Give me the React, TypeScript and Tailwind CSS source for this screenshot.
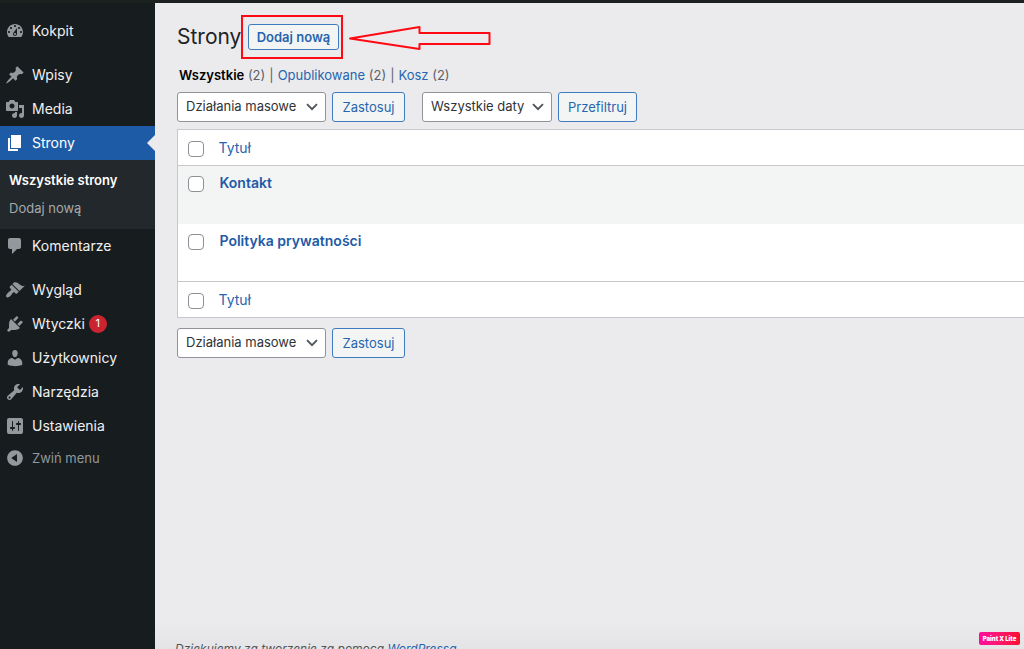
import type { ReactNode } from "react";

const icons = {
  dashboard:
    "M3.76 16h12.48c1.1-1.37 1.76-3.11 1.76-5 0-4.42-3.58-8-8-8s-8 3.58-8 8c0 1.89.66 3.63 1.76 5zM10 4c.55 0 1 .45 1 1s-.45 1-1 1-1-.45-1-1 .45-1 1-1zM6 6c.55 0 1 .45 1 1s-.45 1-1 1-1-.45-1-1 .45-1 1-1zm8 0c.55 0 1 .45 1 1s-.45 1-1 1-1-.45-1-1 .45-1 1-1zm-5.37 5.55L12 7v6c0 1.1-.9 2-2 2s-2-.9-2-2c0-.57.24-1.08.63-1.45zM4 10c.55 0 1 .45 1 1s-.45 1-1 1-1-.45-1-1 .45-1 1-1zm12 0c.55 0 1 .45 1 1s-.45 1-1 1-1-.45-1-1 .45-1 1-1zm-5 3c0-.55-.45-1-1-1s-1 .45-1 1 .45 1 1 1 1-.45 1-1z",
  post: "M10.44 3.02l1.82-1.82 6.36 6.35-1.83 1.82c-1.05-.68-2.48-.57-3.41.36l-.75.75c-.92.93-1.04 2.35-.35 3.41l-1.83 1.82-2.41-2.41-2.8 2.79c-.42.42-3.38 2.71-3.8 2.29s1.86-3.39 2.28-3.81l2.79-2.79L4.1 9.36l1.83-1.82c1.05.69 2.48.57 3.4-.36l.75-.75c.93-.92 1.05-2.35.36-3.41z",
  media:
    "M13 11V4c0-.55-.45-1-1-1h-1.67L9 1H5L3.67 3H2c-.55 0-1 .45-1 1v7c0 .55.45 1 1 1h10c.55 0 1-.45 1-1zM7 4.5c1.38 0 2.5 1.12 2.5 2.5S8.38 9.5 7 9.5 4.5 8.38 4.5 7 5.62 4.5 7 4.5zM14 6h5v10.5c0 1.38-1.12 2.5-2.5 2.5S14 17.88 14 16.5s1.12-2.5 2.5-2.5c.17 0 .34.02.5.05V9h-3V6zm-4 8.05V13h2v3.5c0 1.38-1.12 2.5-2.5 2.5S7 17.88 7 16.5 8.12 14 9.5 14c.17 0 .34.02.5.05z",
  page: "M6 15V2h10v13H6zm-1 1h8v2H3V5h2v11z",
  comments:
    "M5 2h9c1.1 0 2 .9 2 2v7c0 1.1-.9 2-2 2h-2l-5 5v-5H5c-1.1 0-2-.9-2-2V4c0-1.1.9-2 2-2z",
  appearance:
    "M14.48 11.06L7.41 3.99l1.5-1.5c.5-.56 2.3-.47 3.51.32 1.21.8 1.43 1.28 2.91 2.1 1.18.64 2.45 1.26 4.45.85zm-.71.71L6.7 4.7 4.93 6.47c-.39.39-.39 1.02 0 1.41l1.06 1.06c.39.39.39 1.03 0 1.42-.6.6-1.43 1.11-2.21 1.69-.35.26-.7.53-1.01.84C1.43 14.23.4 16.08 1.4 17.07c.99 1 2.84-.03 4.18-1.36.31-.31.58-.66.85-1.02.57-.78 1.08-1.61 1.69-2.21.39-.39 1.02-.39 1.41 0l1.06 1.06c.39.39 1.02.39 1.41 0z",
  plugins:
    "M13.11 4.36L9.87 7.6 8 5.73l3.24-3.24c.35-.34 1.05-.2 1.56.32.52.51.66 1.21.31 1.55zm-8 1.77l.91-1.12 9.01 9.01-1.19.84c-.71.71-2.63 1.16-3.82 1.16H6.14L4.9 17.26c-.59.59-1.54.59-2.12 0-.59-.58-.59-1.53 0-2.12l1.24-1.24v-3.88c0-1.13.4-3.19 1.09-3.89zm7.26 3.97l3.24-3.24c.34-.35 1.04-.21 1.55.31.52.51.66 1.21.31 1.55l-3.24 3.25z",
  users:
    "M10 9.25c-2.27 0-2.73-3.44-2.73-3.44C7 4.02 7.82 2 9.97 2c2.16 0 2.98 2.02 2.71 3.81 0 0-.41 3.44-2.68 3.44zm0 2.57L12.72 10c2.39 0 4.52 2.33 4.52 4.53v2.49s-3.65 1.13-7.24 1.13c-3.65 0-7.24-1.13-7.24-1.13v-2.49c0-2.25 1.94-4.48 4.47-4.48z",
  tools:
    "M16.68 9.77c-1.34 1.34-3.3 1.67-4.95.99l-5.41 6.52c-.99.99-2.59.99-3.58 0s-.99-2.59 0-3.57l6.52-5.42c-.68-1.65-.35-3.61.99-4.95 1.28-1.28 3.12-1.62 4.72-1.06l-2.89 2.89 2.82 2.82 2.86-2.87c.53 1.58.18 3.39-1.08 4.65zM3.81 16.21c.4.39 1.04.39 1.43 0 .4-.4.4-1.04 0-1.43-.39-.4-1.03-.4-1.43 0-.39.39-.39 1.03 0 1.43z",
  settings:
    "M18 16V4c0-1.1-.9-2-2-2H4c-1.1 0-2 .9-2 2v12c0 1.1.9 2 2 2h12c1.1 0 2-.9 2-2zM8 11h1c.55 0 1 .45 1 1s-.45 1-1 1H8v1.5c0 .28-.22.5-.5.5s-.5-.22-.5-.5V13H6c-.55 0-1-.45-1-1s.45-1 1-1h1V5.5c0-.28.22-.5.5-.5s.5.22.5.5V11zm5-2h-1c-.55 0-1-.45-1-1s.45-1 1-1h1V5.5c0-.28.22-.5.5-.5s.5.22.5.5V7h1c.55 0 1 .45 1 1s-.45 1-1 1h-1v5.5c0 .28-.22.5-.5.5s-.5-.22-.5-.5V9z",
  collapse:
    "M10 2.16c4.33 0 7.84 3.51 7.84 7.84s-3.51 7.84-7.84 7.84S2.16 14.33 2.16 10 5.71 2.16 10 2.16zm2 11.72V6.12L6.18 9.97z",
};

type IconName = keyof typeof icons;

function Icon({ name }: { name: IconName }) {
  return (
    <svg viewBox="0 0 20 20" className="size-5 shrink-0" fill="currentColor" fillRule="evenodd" aria-hidden="true">
      <path d={icons[name]} />
    </svg>
  );
}

function MenuItem({ icon, label, badge }: { icon: IconName; label: string; badge?: string }) {
  return (
    <li>
      <a href="#" className="flex h-[34px] items-center gap-[7px] pl-[5px] text-[#f0f0f1]">
        <span className="text-[#93989d]">
          <Icon name={icon} />
        </span>
        {label}
        {badge && (
          <span className="-ml-[3px] flex size-[18px] items-center justify-center rounded-full bg-[#cb2431] text-[11px] text-white">
            {badge}
          </span>
        )}
      </a>
    </li>
  );
}

function Sidebar() {
  return (
    <nav aria-label="Menu główne" className="w-[155px] shrink-0 bg-[#171c1f] pt-[11px] text-sm">
      <ul>
        <MenuItem icon="dashboard" label="Kokpit" />
      </ul>
      <ul className="mt-[10px]">
        <MenuItem icon="post" label="Wpisy" />
        <MenuItem icon="media" label="Media" />
        <li>
          <a href="#" aria-current="page" className="relative flex h-[34px] items-center gap-[7px] bg-[#1e5ba6] pl-[5px] text-white">
            <Icon name="page" />
            Strony
            <span className="absolute top-[9px] right-0 border-y-8 border-r-8 border-y-transparent border-r-[#ebebed]" />
          </a>
          <ul className="bg-[#23282c] pt-[6px] pb-[7px] pl-[9px] text-[13px]">
            <li className="flex h-7 items-center">
              <a href="#" className="font-semibold text-white">
                Wszystkie strony
              </a>
            </li>
            <li className="flex h-7 items-center">
              <a href="#" className="text-[#a5a8ab]">
                Dodaj nową
              </a>
            </li>
          </ul>
        </li>
        <MenuItem icon="comments" label="Komentarze" />
      </ul>
      <ul className="mt-[10px]">
        <MenuItem icon="appearance" label="Wygląd" />
        <MenuItem icon="plugins" label="Wtyczki" badge="1" />
        <MenuItem icon="users" label="Użytkownicy" />
        <MenuItem icon="tools" label="Narzędzia" />
        <MenuItem icon="settings" label="Ustawienia" />
      </ul>
      <button type="button" className="flex h-[30px] w-full items-center gap-[7px] pl-[5px] text-[13px] text-[#93989d]">
        <Icon name="collapse" />
        Zwiń menu
      </button>
    </nav>
  );
}

function Select({ label, option, width }: { label: string; option: string; width: string }) {
  return (
    <span className="relative flex">
      <select
        aria-label={label}
        className={`h-[30px] appearance-none rounded-[3px] border border-[#909398] bg-white pl-2 text-[13px] text-[#2f3337] ${width}`}
      >
        <option>{option}</option>
      </select>
      <svg
        viewBox="0 0 12 8"
        className="pointer-events-none absolute top-[11px] right-2 h-2 w-3"
        fill="none"
        stroke="#50555a"
        strokeWidth="1.9"
        aria-hidden="true"
      >
        <path d="M1 1.2l5 5 5-5" />
      </svg>
    </span>
  );
}

function Button({ children, width }: { children: ReactNode; width: string }) {
  return (
    <button
      type="button"
      className={`h-[30px] rounded-[3px] border border-[#3f7cbf] bg-[#f3f5f5] pt-[2px] text-[13px] text-[#2765ae] ${width}`}
    >
      {children}
    </button>
  );
}

function BulkActions() {
  return (
    <div className="flex gap-[6px]">
      <Select label="Działania masowe" option="Działania masowe" width="w-[149px]" />
      <Button width="w-[73px]">Zastosuj</Button>
    </div>
  );
}

function Check({ label }: { label: string }) {
  return (
    <input
      type="checkbox"
      aria-label={label}
      className="block size-4 appearance-none rounded-[4px] border border-[#8c8f94] bg-white"
    />
  );
}

function HeadingRow() {
  return (
    <tr className="h-9">
      <th className="w-[41px] pt-[3px] pl-[10px]">
        <Check label="Zaznacz wszystko" />
      </th>
      <th className="text-left font-normal">
        <a href="#" className="text-[#2765ae]">
          Tytuł
        </a>
      </th>
    </tr>
  );
}

function PagesTable() {
  const pages = ["Kontakt", "Polityka prywatności"];
  return (
    <table className="w-full border-collapse border-y border-l border-[#c6c8cc] bg-white text-sm">
      <thead className="border-b border-[#c6c8cc]">
        <HeadingRow />
      </thead>
      <tbody>
        {pages.map((title) => (
          <tr key={title} className="h-[58px] align-top odd:bg-[#f3f5f5]">
            <td className="pt-[10px] pl-[10px]">
              <Check label={`Zaznacz ${title}`} />
            </td>
            <td className="pt-[7px] pl-px">
              <a href="#" className="font-semibold text-[#1e5ba6]">
                {title}
              </a>
            </td>
          </tr>
        ))}
      </tbody>
      <tfoot className="border-t border-[#c6c8cc]">
        <HeadingRow />
      </tfoot>
    </table>
  );
}

function Views() {
  return (
    <ul className="mt-2 flex gap-1 pl-[2px] text-[13px] leading-4 text-[#5c6065]">
      <li>
        <a href="#" className="font-semibold text-black">
          Wszystkie
        </a>{" "}
        (2)
      </li>
      <li aria-hidden="true">|</li>
      <li>
        <a href="#" className="text-[#2765ae]">
          Opublikowane
        </a>{" "}
        (2)
      </li>
      <li aria-hidden="true">|</li>
      <li>
        <a href="#" className="text-[#2765ae]">
          Kosz
        </a>{" "}
        (2)
      </li>
    </ul>
  );
}

export default function App() {
  return (
    <div className="flex h-screen flex-col overflow-hidden bg-[#ebebed] font-['Inter',sans-serif]">
      <div className="h-[3px] shrink-0 bg-[#1b211f]" />
      <div className="flex min-h-0 grow">
        <Sidebar />
        <main className="flex min-w-0 grow flex-col pt-3 pl-[22px]">
          <header className="flex h-11 items-center">
            <h1 className="w-16 text-[21px] whitespace-nowrap text-[#1d2327]">Strony</h1>
            <div className="flex h-11 w-[102px] items-center border-2 border-[#ff0a14] pl-[5px]">
              <a
                href="#"
                className="flex h-[26px] w-[91px] items-center justify-center rounded-[3px] border border-[#3f7cbf] bg-[#f3f5f5] pt-px text-[13px] font-semibold text-[#2765ae]"
              >
                Dodaj nową
              </a>
            </div>
            <svg
              viewBox="0 0 144 26"
              className="ml-[5px] h-[26px] w-36"
              fill="none"
              stroke="#ff0a14"
              strokeWidth="2"
              strokeLinejoin="round"
              aria-hidden="true"
            >
              <path d="M2 14.500L71.500 3v6h70v11h-70v5z" />
            </svg>
          </header>
          <Views />
          <div className="mt-[9px] mb-[7px] flex gap-[17px]">
            <BulkActions />
            <div className="flex gap-[6px]">
              <Select label="Filtruj według daty" option="Wszystkie daty" width="w-[130px]" />
              <Button width="w-[79px]">Przefiltruj</Button>
            </div>
          </div>
          <PagesTable />
          <div className="mt-[10px]">
            <BulkActions />
          </div>
          <footer className="mt-auto -mb-[10px] -ml-[22px] shrink-0 bg-linear-to-b from-[#ebebed] to-[#e2e2e4] pt-[18px] pl-5 text-xs leading-5 text-[#50555a] italic">
            Dziękujemy za tworzenie za pomocą{" "}
            <a href="#" className="text-[#2765ae]">
              WordPressa
            </a>
          </footer>
        </main>
      </div>
      <div className="fixed right-1 bottom-1 flex h-[13px] w-[41px] items-center justify-center rounded-[2px] bg-linear-to-r from-[#ff0a9c] to-[#fb0d2b] text-[6px] font-black whitespace-nowrap text-white">
        Paint X Lite
      </div>
    </div>
  );
}
